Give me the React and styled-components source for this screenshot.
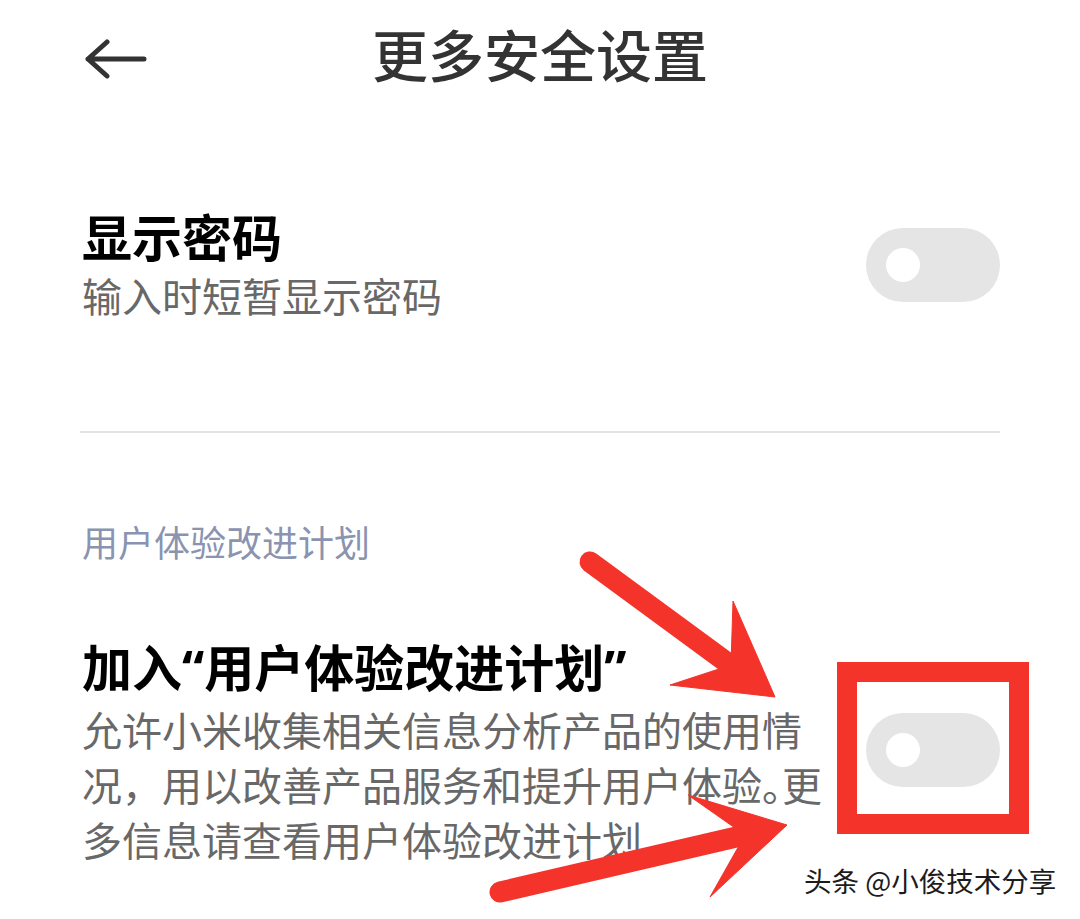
import styled, { createGlobalStyle } from "styled-components";

const GlobalStyle = createGlobalStyle`
  html, body {
    margin: 0;
    padding: 0;
    background: #ffffff;
  }
  body {
    font-family: "Noto Sans CJK SC", "Noto Sans", sans-serif;
  }
`;

const Page = styled.div`
  position: relative;
  width: 1080px;
  height: 919px;
  overflow: hidden;
  background: #ffffff;
`;

const Header = styled.header`
  display: grid;
  grid-template-columns: 1fr auto 1fr;
  align-items: center;
  height: 106px;
`;

const BackButton = styled.div`
  display: flex;
  margin: 12px 0 0 85px;
  color: #333333;
  cursor: pointer;
`;

const Title = styled.h1`
  margin: 0;
  font-size: 56px;
  line-height: 56px;
  font-weight: 500;
  color: #333333;
`;

const SettingRow = styled.div`
  display: flex;
  align-items: center;
  justify-content: space-between;
  padding: ${(p) => p.$pad || "0 80px"};
  margin-top: ${(p) => p.$top || 0}px;
`;

const TextBlock = styled.div`
  display: flex;
  flex-direction: column;
  flex: 1;
  min-width: 0;
`;

const RowTitle = styled.div`
  font-family: "Noto Sans", "Noto Sans CJK SC", sans-serif;
  font-size: 50px;
  line-height: 56px;
  font-weight: 700;
  color: #000000;
  margin-bottom: ${(p) => p.$gap || 1}px;
  padding-left: 2px;
`;

const RowDesc = styled.div`
  font-size: 40px;
  line-height: ${(p) => p.$lh || 56}px;
  color: #686868;
  white-space: nowrap;
  padding-left: 2px;
`;

// MIUI sets the full stop at half width
const HalfStop = styled.span`
  font-feature-settings: "halt";
`;

const ToggleWrap = styled.div`
  position: relative;
  flex-shrink: 0;
  margin-bottom: ${(p) => p.$lift || 0}px;
`;

const Toggle = styled.div`
  display: flex;
  align-items: center;
  width: 134px;
  height: 74px;
  padding-left: 20px;
  box-sizing: border-box;
  border-radius: 37px;
  background: #e5e5e5;
`;

const Knob = styled.span`
  width: 34px;
  height: 34px;
  border-radius: 50%;
  background: #ffffff;
`;

const RedFrame = styled.div`
  position: absolute;
  top: -51px;
  left: -29px;
  right: -29px;
  bottom: -47px;
  border: 20px solid #f4332b;
`;

const Divider = styled.hr`
  margin: 0 80px;
  border: 0;
  height: 2px;
  background: #e3e3e3;
`;

const SectionTitle = styled.div`
  margin: 83px 0 0 82px;
  font-size: 36px;
  line-height: 50px;
  color: #8a93b0;
`;

const ArrowLayer = styled.svg`
  position: absolute;
  top: 0;
  left: 0;
  pointer-events: none;
`;

const Watermark = styled.div`
  position: absolute;
  left: 804px;
  top: 864px;
  font-size: 27.5px;
  line-height: 32px;
  color: #1c1c1c;
  text-shadow: 1px 1px 0 #ffffff, -1px -1px 0 #ffffff;
  white-space: nowrap;
`;

const SwitchOff = ({ lift, marked }) => (
  <ToggleWrap $lift={lift}>
    <Toggle>
      <Knob />
    </Toggle>
    {marked && <RedFrame />}
  </ToggleWrap>
);

const App = () => {
  return (
    <Page>
      <GlobalStyle />
      <Header>
        <BackButton>
          <svg width="62" height="40" viewBox="0 0 62 40" fill="none">
            <path
              d="M22 3 L3 20 L22 37 M3 20 H59"
              stroke="currentColor"
              strokeWidth="5"
              strokeLinecap="round"
              strokeLinejoin="round"
            />
          </svg>
        </BackButton>
        <Title>更多安全设置</Title>
        <span />
      </Header>

      <SettingRow $pad="104px 80px 108px 80px">
        <TextBlock>
          <RowTitle>显示密码</RowTitle>
          <RowDesc>输入时短暂显示密码</RowDesc>
        </TextBlock>
        <SwitchOff lift={4} />
      </SettingRow>

      <Divider />

      <SectionTitle>用户体验改进计划</SectionTitle>

      <SettingRow $top={74}>
        <TextBlock>
          <RowTitle $gap={6}>加入“用户体验改进计划”</RowTitle>
          <RowDesc $lh={55}>
            允许小米收集相关信息分析产品的使用情
            <br />
            况，用以改善产品服务和提升用户体验<HalfStop>。</HalfStop>更
            <br />
            多信息请查看用户体验改进计划<HalfStop>。</HalfStop>
          </RowDesc>
        </TextBlock>
        <SwitchOff lift={8} marked />
      </SettingRow>

      <ArrowLayer width="1080" height="919" viewBox="0 0 1080 919">
        <g fill="#f4332b" stroke="#f4332b">
          <line x1="590" y1="562" x2="733" y2="667" strokeWidth="21" strokeLinecap="round" />
          <polygon points="733,601 775,697 670,685 731,665" strokeWidth="1" />
          <line x1="500" y1="892" x2="745" y2="835" strokeWidth="21" strokeLinecap="round" />
          <polygon points="688,795 787,825 710,897 745,835" strokeWidth="1" />
        </g>
      </ArrowLayer>

      <Watermark>头条 @小俊技术分享</Watermark>
    </Page>
  );
};

export default App;
